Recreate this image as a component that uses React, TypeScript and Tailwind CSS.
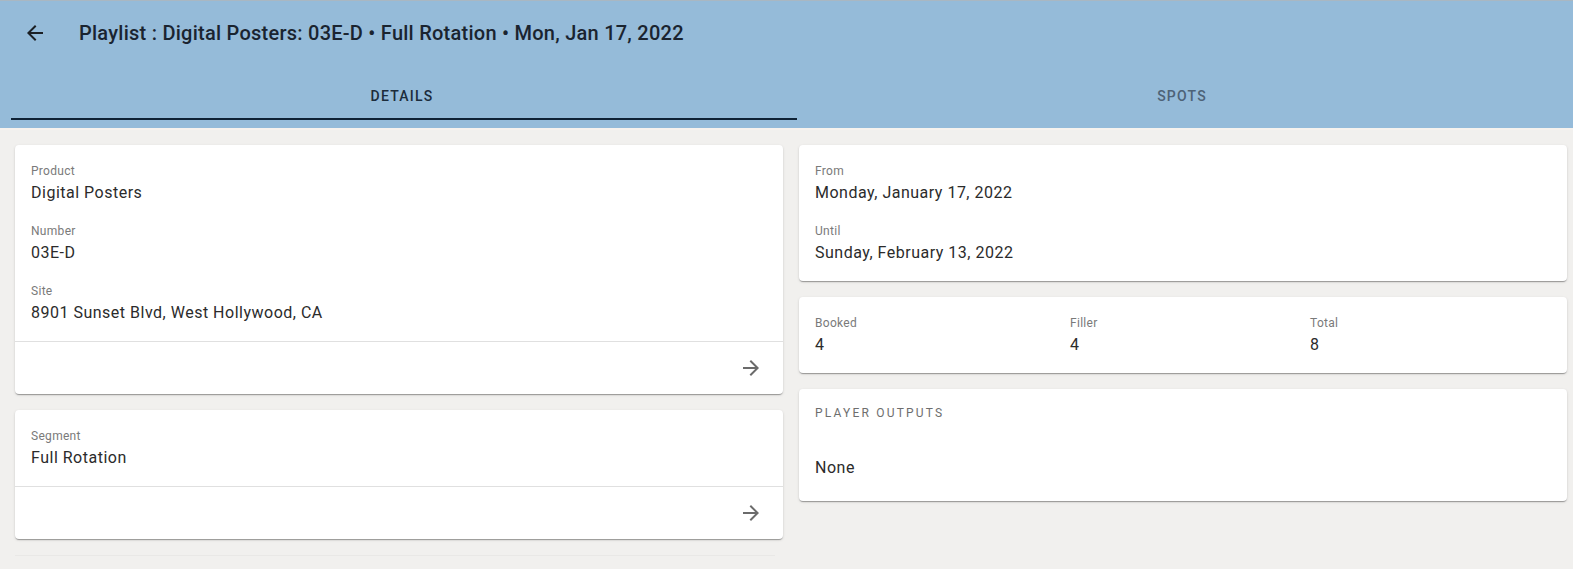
import React from "react";

const ArrowBack = () => (
  <svg width="24" height="24" viewBox="0 0 24 24" fill="currentColor">
    <path d="M20 11H7.83l5.59-5.59L12 4l-8 8 8 8 1.41-1.41L7.83 13H20v-2z" />
  </svg>
);

const ArrowForward = () => (
  <svg width="24" height="24" viewBox="0 0 24 24" fill="currentColor">
    <path d="m12 4-1.41 1.41L16.17 11H4v2h12.17l-5.58 5.59L12 20l8-8z" />
  </svg>
);

const Field = ({ label, value, last }: { label: string; value: string; last?: boolean }) => (
  <div className={last ? "" : "mb-4"}>
    <div className="text-[12px] leading-[20px] text-[#7a7a7a] tracking-[0.3px]">{label}</div>
    <div className="text-[16px] leading-[24px] text-[#2b2b2b] tracking-[0.5px]">{value}</div>
  </div>
);

const cardCls =
  "bg-white rounded-[4px] shadow-[0_2px_1px_-1px_rgba(0,0,0,0.2),0_1px_1px_0_rgba(0,0,0,0.14),0_1px_3px_0_rgba(0,0,0,0.12)]";

const Actions = () => (
  <div className="border-t border-[#e0e0e0] h-[53px] flex items-center justify-end pr-[12px]">
    <div className="w-10 h-10 flex items-center justify-center text-[#6b6b6b]">
      <ArrowForward />
    </div>
  </div>
);

export default function App() {
  return (
    <div
      className="w-[1573px] h-[569px] bg-[#f1f0ee] overflow-hidden"
      style={{ fontFamily: "Roboto, 'Noto Sans', sans-serif" }}
    >
      <header className="bg-[#95bbd9] border-t border-[#a9b7c2] pb-2">
        <div className="h-[64px] flex items-center pl-[23px]">
          <div className="text-[#1b1f24]">
            <ArrowBack />
          </div>
          <div className="ml-[32px] text-[20px] font-medium text-[#1a2430] tracking-[0.25px]">
            Playlist : Digital Posters: 03E-D • Full Rotation • Mon, Jan 17, 2022
          </div>
        </div>
        <div className="flex pl-[11px] pr-[6px] mt-[7px]">
          <div className="flex-1 h-[48px] flex items-center justify-center relative">
            <span className="text-[14px] font-medium uppercase tracking-[1.2px] text-[#1c2c3c] pl-[4px]">Details</span>
            <div className="absolute left-0 right-[-8px] bottom-0 h-[2px] bg-[#0f2236]" />
          </div>
          <div className="flex-1 h-[48px] flex items-center justify-center">
            <span className="text-[14px] font-medium uppercase tracking-[1.2px] text-[#4d6277] pl-[8px]">Spots</span>
          </div>
        </div>
      </header>
      <div className="h-[2px] bg-[#f6f2ee]" />

      <div className="flex gap-[16px] pl-[15px] pr-[6px] pt-[15px]">
        <div className="w-[768px] shrink-0 flex flex-col gap-4">
          <div className={cardCls}>
            <div className="p-4">
              <Field label="Product" value="Digital Posters" />
              <Field label="Number" value="03E-D" />
              <Field label="Site" value="8901 Sunset Blvd, West Hollywood, CA" last />
            </div>
            <Actions />
          </div>
          <div className={cardCls}>
            <div className="p-4">
              <Field label="Segment" value="Full Rotation" last />
            </div>
            <Actions />
          </div>
          <div className="h-px bg-[#e9e8e6] mt-0 w-[760px]" />
        </div>

        <div className="flex-1 flex flex-col gap-4">
          <div className={cardCls}>
            <div className="px-4 pt-4 pb-4">
              <Field label="From" value="Monday, January 17, 2022" />
              <Field label="Until" value="Sunday, February 13, 2022" last />
            </div>
          </div>
          <div className={cardCls}>
            <div className="px-4 pt-4 pb-4 grid grid-cols-[255px_240px_1fr]">
              <Field label="Booked" value="4" last />
              <Field label="Filler" value="4" last />
              <Field label="Total" value="8" last />
            </div>
          </div>
          <div className={cardCls}>
            <div className="px-4 pt-[17px] pb-[21px]">
              <div className="text-[12px] leading-[14px] uppercase tracking-[2.2px] text-[#6e6e6e]">
                Player Outputs
              </div>
              <div className="mt-[36px] text-[16px] leading-[24px] text-[#2b2b2b] tracking-[0.5px]">None</div>
            </div>
          </div>
        </div>
      </div>
    </div>
  );
}
